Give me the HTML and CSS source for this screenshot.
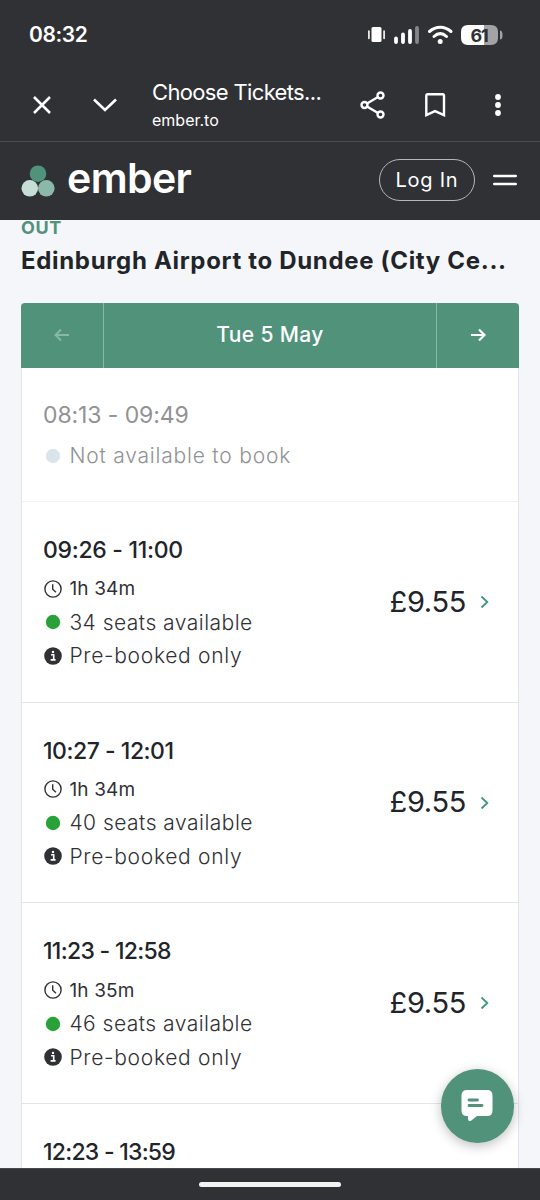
FILE: index.html
```html
<!DOCTYPE html>
<html lang="en">
<head>
<meta charset="utf-8">
<title>Choose Tickets</title>
<link rel="stylesheet" href="styles.css">
</head>
<body>
<svg width="0" height="0" class="defs" aria-hidden="true">
  <symbol id="clock" viewBox="0 0 18 18"><circle cx="9" cy="9" r="8.1" fill="none" stroke="currentColor" stroke-width="1.4"/><path d="M8.7 4.3V9.3L12 12.2" fill="none" stroke="currentColor" stroke-width="1.4"/></symbol>
  <symbol id="info" viewBox="0 0 18 18"><circle cx="9" cy="9" r="8.8" fill="currentColor"/><path d="M7 7.8h2.700v5M6.600 12.900h5" fill="none" stroke="#fff" stroke-width="1.600"/><circle cx="9" cy="5" r="1.200" fill="#fff"/></symbol>
  <symbol id="dot" viewBox="0 0 18 18"><circle cx="9" cy="9" r="7.200" fill="currentColor"/></symbol>
  <symbol id="chevron" viewBox="0 0 10 14"><path d="M1.500 1.500L7.300 7L1.500 12.500" fill="none" stroke="currentColor" stroke-width="1.800"/></symbol>
</svg>
<div class="screen">
  <div class="status">
    <span class="clock">08:32</span>
    <svg class="status-icons" width="140" height="26" viewBox="0 0 140 26">
      <rect x="6.500" y="6" width="10" height="15" rx="1.500" fill="#fff"/>
      <path d="M3.900 10v7.500M19.100 10v7.500" stroke="#fff" stroke-width="1.600" stroke-linecap="round"/>
      <g stroke="#fff" stroke-width="3.800" stroke-linecap="round"><path d="M31 17.500v3.500M38 13.500V21M45 10V21"/><path d="M52 7V21" stroke="#85868a"/></g>
      <g fill="none" stroke="#fff" stroke-width="3" stroke-linecap="round"><path d="M64.500 10.500C71 4.800 79.500 4.800 86 10.500"/><path d="M69 15.500C73 11.800 77.500 11.800 81.500 15.500"/></g>
      <circle cx="75.200" cy="20.500" r="2.500" fill="#fff"/>
      <path d="M103 4H119V24H103Q96 24 96 17V11Q96 4 103 4" fill="#fff"/>
      <path d="M119 4H126Q133 4 133 11V17Q133 24 126 24H119Z" fill="#a3a3a5"/>
      <path d="M135 9.500Q137.500 9.500 137.500 14T135 18.500Z" fill="#a3a3a5"/>
      <text x="105.500" y="20.500" class="battery">61</text>
    </svg>
  </div>
  <div class="toolbar">
    <svg class="close" width="20" height="20" viewBox="0 0 20 20"><path d="M2 2L18 18M18 2L2 18" stroke="#fff" stroke-width="2.500"/></svg>
    <svg class="down" width="26" height="16" viewBox="0 0 26 16"><path d="M2 2.500L13 13L24 2.500" fill="none" stroke="#fff" stroke-width="2.600"/></svg>
    <div class="page-id"><div class="page-title">Choose Tickets...</div><div class="page-host">ember.to</div></div>
    <svg class="tools" width="150" height="30" viewBox="0 0 150 30">
      <g fill="none" stroke="#fff" stroke-width="2.400"><circle cx="24.500" cy="5.500" r="3"/><circle cx="8.500" cy="15" r="3"/><circle cx="24.500" cy="24.500" r="3"/><path d="M11 13.500L22 7M11 16.500L22 23M71 4.200H86.500Q88 4.200 88 5.700V25.200L79 21.100L70.300 25.200V5.700Q70.300 4.200 71.800 4.200"/></g>
      <g fill="#fff"><circle cx="142" cy="7" r="2.900"/><circle cx="142" cy="15" r="2.900"/><circle cx="142" cy="23" r="2.900"/></g>
    </svg>
  </div>
  <header class="site-head">
    <svg class="logo" width="34" height="32" viewBox="0 0 34 32"><circle cx="17" cy="8.700" r="8.300" fill="#51927b"/><circle cx="8.800" cy="23.300" r="8.300" fill="#c7ded6"/><circle cx="25.300" cy="23.300" r="8.300" fill="#8bb9a9"/></svg>
    <span class="brand">ember</span>
    <a class="login">Log In</a>
    <svg class="menu" width="24" height="12" viewBox="0 0 24 12"><path d="M1.200 2H22.800M1.200 10H22.800" stroke="#fff" stroke-width="2.400" stroke-linecap="round"/></svg>
  </header>
  <main>
    <div class="leg">OUT</div>
    <h1>Edinburgh Airport to Dundee (City Ce...</h1>
    <section class="results">
      <div class="datebar">
        <div class="prev"><svg width="16" height="14" viewBox="0 0 16 14"><path d="M15 7H2M7 1.500L1.500 7L7 12.500" fill="none" stroke="currentColor" stroke-width="1.900"/></svg></div>
        <div class="date">Tue 5 May</div>
        <div class="next"><svg width="16" height="14" viewBox="0 0 16 14"><path d="M1 7H14M9 1.500L14.500 7L9 12.500" fill="none" stroke="currentColor" stroke-width="2.200"/></svg></div>
      </div>
      <article class="trip sold"><div class="info"><div class="time t0">08:13 - 09:49</div><div class="line none"><svg class="grey"><use href="#dot"/></svg><span>Not available to book</span></div></div></article>
      <article class="trip"><div class="info"><div class="time t1">09:26 - 11:00</div><div class="line dur"><svg><use href="#clock"/></svg><span>1h 34m</span></div><div class="line seats"><svg class="green"><use href="#dot"/></svg><span>34 seats available</span></div><div class="line pre"><svg><use href="#info"/></svg><span>Pre-booked only</span></div></div><div class="price">£9.55</div><svg class="go"><use href="#chevron"/></svg></article>
      <article class="trip"><div class="info"><div class="time t2">10:27 - 12:01</div><div class="line dur"><svg><use href="#clock"/></svg><span>1h 34m</span></div><div class="line seats"><svg class="green"><use href="#dot"/></svg><span>40 seats available</span></div><div class="line pre"><svg><use href="#info"/></svg><span>Pre-booked only</span></div></div><div class="price">£9.55</div><svg class="go"><use href="#chevron"/></svg></article>
      <article class="trip"><div class="info"><div class="time t3">11:23 - 12:58</div><div class="line dur"><svg><use href="#clock"/></svg><span>1h 35m</span></div><div class="line seats"><svg class="green"><use href="#dot"/></svg><span>46 seats available</span></div><div class="line pre"><svg><use href="#info"/></svg><span>Pre-booked only</span></div></div><div class="price">£9.55</div><svg class="go"><use href="#chevron"/></svg></article>
      <article class="trip"><div class="info"><div class="time t4">12:23 - 13:59</div></div></article>
    </section>
  </main>
  <div class="chat"><svg width="32" height="33" viewBox="0 0 32 33"><path d="M6 1H26Q31.500 1 31.500 6.500V21.500Q31.500 27 26 27H16L10 31.700Q7 33 7 30V27H6Q.5 27 .5 21.500V6.500Q.5 1 6 1Z" fill="#fff"/><path d="M8 11H16.500M8 16.500H21" stroke="#51927b" stroke-width="2.800" stroke-linecap="round"/></svg></div>
  <footer><div class="handle"></div></footer>
</div>
</body>
</html>
```
FILE: styles.css
```css
* { box-sizing: border-box; }
body { margin: 0; font-family: Inter, "Liberation Sans", sans-serif; color: #212529; }
svg { display: block; flex: none; }
.defs { position: absolute; }
.screen { position: relative; width: 540px; height: 1200px; overflow: hidden; display: flex; flex-direction: column; background: #303135; white-space: nowrap; }
.status { height: 68px; display: flex; align-items: center; justify-content: space-between; padding: 0 36px 0 29px; color: #fff; }
.clock { font-size: 21px; font-weight: 600; letter-spacing: -0.4px; }
.battery { font-size: 18px; font-weight: 700; fill: #303135; letter-spacing: -1.2px; }
.status-icons { margin-right: -1px; }
.toolbar { height: 74px; display: flex; align-items: center; padding-left: 32px; color: #fff; border-bottom: 1px solid #4b4c50; }
.down { margin-left: 40px; }
.page-id { margin-left: 34px; width: 204px; padding-top: 3px; }
.page-title { font-size: 22px; line-height: 28px; font-weight: 400; letter-spacing: -0.65px; }
.page-host { font-size: 16px; line-height: 28px; }
.site-head { height: 78px; display: flex; align-items: center; padding: 0 23px 2px 21px; color: #fff; }
.logo { margin-top: 1px; }
.brand { margin: 0 0 5px 12px; font-size: 41px; line-height: 50px; font-weight: 600; letter-spacing: -0.6px; }
.login { margin-left: auto; width: 96px; height: 42px; border: 1px solid #b5b6b8; border-radius: 22px; display: flex; align-items: center; justify-content: center; font-size: 20px; letter-spacing: 0.75px; }
.menu { margin-left: 18px; }
main { height: 948px; overflow: hidden; background: #f5f6f9; padding: 0 21px; }
.leg { height: 14px; line-height: 16px; font-size: 18px; font-weight: 700; letter-spacing: 0.6px; color: #51927b; }
h1 { margin: 9px 0 0; font-size: 24px; line-height: 36px; font-weight: 700; letter-spacing: 0.67px; }
.results { margin-top: 23.5px; background: #fff; border-left: 1px solid #e2e5eb; border-right: 1px solid #e2e5eb; }
.datebar { height: 65px; margin: 0 -1px; display: flex; background: #51927b; color: #fff; border-radius: 4px 4px 0 0; }
.datebar > div { display: flex; align-items: center; justify-content: center; }
.prev { width: 82px; }
.prev svg { color: #89b8a6; }
.datebar .date { flex: 1; padding-bottom: 2px; font-size: 21px; font-weight: 500; letter-spacing: 0.35px; border: solid #8bb7a7; border-width: 0 1px; }
.next { width: 82px; }
.trip { height: 200.7px; display: flex; padding: 33px 28px 0 21px; border-bottom: 1px solid #e2e5eb; }
.sold { height: 134.5px; padding-top: 32.5px; border-color: #f0f1f4; color: #919295; }
.info { flex: 1; }
.time { font-size: 23px; line-height: 30px; font-weight: 500; margin-bottom: 7px; }
.t0 { font-weight: 400; letter-spacing: -0.1px; }
.t1 { letter-spacing: -0.3px; }
.t2 { letter-spacing: -0.47px; }
.t3 { letter-spacing: -0.7px; }
.t4 { letter-spacing: -0.75px; }
.line { height: 33.5px; display: flex; align-items: center; gap: 7px; font-size: 21px; color: #303135; }
.line svg { width: 18px; height: 18px; margin-left: 1.4px; }
.sold .line { color: #919295; font-weight: 300; margin-top: 9px; }
.line .grey { color: #dce4eb; }
.line .green { color: #28a138; }
.line.dur { font-size: 19px; letter-spacing: 0.15px; }
.seats, .pre { font-weight: 300; }
.none { letter-spacing: 0.8px; }
.seats { letter-spacing: 0.48px; }
.pre { letter-spacing: 0.7px; }
.price { margin-top: 46.5px; font-size: 29px; line-height: 40px; font-weight: 400; letter-spacing: -0.35px; }
.go { width: 10px; height: 14px; margin: 60px 0 0 14px; color: #409578; }
.chat { position: absolute; left: 440.5px; top: 1069px; width: 73.5px; height: 73.5px; border-radius: 50%; background: #51927b; box-shadow: 0 3px 12px rgba(0,0,0,.25); display: flex; align-items: center; justify-content: center; }
footer { height: 32px; display: flex; justify-content: center; align-items: center; border-top: 1px solid #494a4f; }
.handle { width: 142px; height: 5px; border-radius: 3px; background: #f3f3f4; }
```
